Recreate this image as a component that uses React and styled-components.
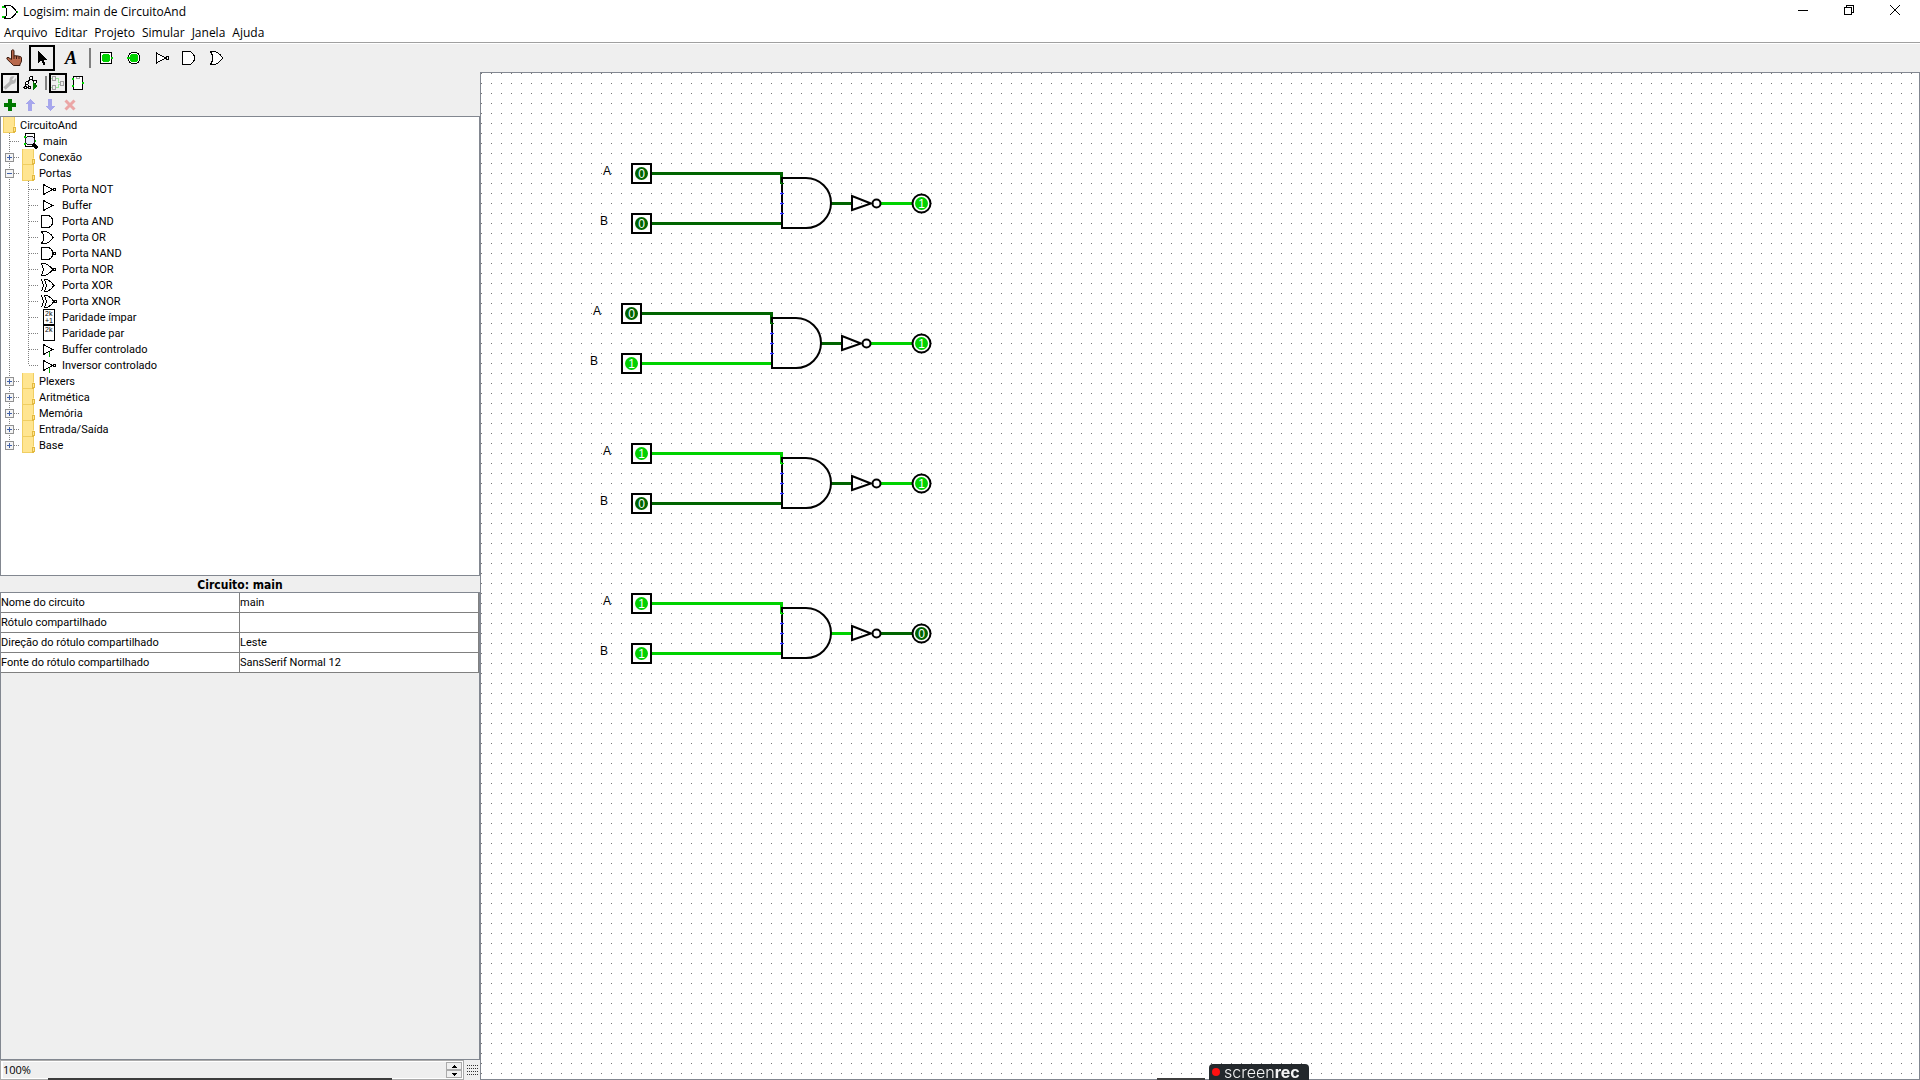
import React from "react";
import styled, { createGlobalStyle, css } from "styled-components";

const GlobalStyle = createGlobalStyle`
  *, *::before, *::after { box-sizing: border-box; }
  html, body { margin: 0; height: 100%; overflow: hidden; }
  body { background: #efefef; color: #000; font-family: Roboto, "Noto Sans", sans-serif; font-size: 11px; }
  button { font: inherit; color: inherit; background: none; border: 0; padding: 0; }
  svg { display: block; flex: none; }
`;

const DARK = "#006400";
const BRIGHT = "#00d200";
const LINE = "#828790";

/* ---------- window frame ---------- */
const Window = styled.div`
  display: flex;
  flex-direction: column;
  height: 100vh;
`;
const TitleBar = styled.header`
  display: flex;
  align-items: center;
  height: 23px;
  padding: 0 2px;
  background: #fff;
  font-family: "Open Sans", "Noto Sans", sans-serif;
`;
const Title = styled.h1`
  flex: 1;
  margin: 0;
  padding-left: 4px;
  font-size: 12px;
  line-height: 22px;
  font-weight: 400;
`;
const WindowButton = styled.button`
  display: grid;
  place-items: center;
  width: 46px;
  height: 20px;
  margin-bottom: 4px;
`;
const MenuBar = styled.nav`
  display: flex;
  gap: 7px;
  height: 20px;
  padding-left: 4px;
  background: #fff;
  border-bottom: 1px solid #a0a0a0;
`;
const MenuButton = styled.button`
  font-family: "Open Sans", "Noto Sans", sans-serif;
  font-size: 12px;
  line-height: 20px;
`;

/* ---------- toolbars ---------- */
const ToolBar = styled.div`
  display: flex;
  height: 29px;
  border-top: 1px solid #fff;
`;
const ToolButton = styled.button`
  display: grid;
  place-items: center;
  width: 26px;
  height: 26px;
  margin: 1px;
  border: 2px solid ${(p) => (p.$selected ? "#000" : "transparent")};
`;
const Separator = styled.span`
  width: 2px;
  height: 20px;
  margin: 4px 1px 4px 5px;
  background: #808080;
`;
const MiniBar = styled.div`
  display: flex;
  height: 22px;
  padding: 1px 0;
`;
const MiniButton = styled(ToolButton)`
  width: 18px;
  height: 20px;
  margin: 0 1px;
`;
const MiniSeparator = styled(Separator)`
  height: 14px;
  margin: 3px 1px 3px 5px;
`;

/* ---------- body ---------- */
const Body = styled.div`
  display: flex;
  flex: 1;
  min-height: 0;
`;
const Sidebar = styled.aside`
  display: flex;
  flex-direction: column;
  width: 25%;
`;
const Explorer = styled.section`
  display: flex;
  flex-direction: column;
  flex: 0 0 504px;
`;
const TreePane = styled.div`
  flex: 1;
  min-height: 0;
  overflow: hidden;
  background: #fff;
  border: 1px solid ${LINE};
`;
const TreeList = styled.ul`
  list-style: none;
  margin: 0;
  padding: 0;
`;
const TreeRow = styled.div`
  display: flex;
  height: 16px;
  line-height: 18px;
  white-space: nowrap;
`;
const Attributes = styled.section`
  display: flex;
  flex-direction: column;
  flex: 1;
  min-height: 0;
`;
const AttributesTitle = styled.h2`
  height: 16px;
  margin: 0;
  font-family: "DejaVu Sans Condensed", "DejaVu Sans", sans-serif;
  font-stretch: condensed;
  font-size: 12px;
  line-height: 18px;
  text-align: center;
`;
const AttributesPane = styled.div`
  flex: 1;
  border: 1px solid ${LINE};
`;
const Table = styled.table`
  width: 100%;
  table-layout: fixed;
  border-collapse: separate;
  border-spacing: 0;
  background: #fff;
`;
const cell = css`
  height: 20px;
  padding: 0;
  border-right: 1px solid #808080;
  border-bottom: 1px solid #808080;
  font-weight: 400;
  text-align: left;
  line-height: 19px;
`;
const NameCell = styled.th`${cell}`;
const ValueCell = styled.td`${cell}`;

const StatusRow = styled.div`
  display: flex;
  height: 20px;
`;
const ZoomBox = styled.div`
  display: flex;
  flex: 1;
  padding: 1px;
  background: #fff;
  border: 1px solid #ababab;
`;
const ZoomInput = styled.input`
  flex: 1;
  min-width: 0;
  margin: 0 0 0 1px;
  padding: 0;
  border: 0;
  background: #efefef;
  font-family: "Open Sans", "Noto Sans", sans-serif;
  font-size: 11px;
  line-height: 16px;
`;
const Spinner = styled.div`
  display: flex;
  flex-direction: column;
  width: 16px;
`;
const SpinButton = styled.button`
  display: grid;
  place-items: center;
  height: 8px;
  border: 1px solid #ababab;
  background: #f0f0f0;
`;
const Grip = styled.div`
  display: grid;
  place-items: center;
  width: 16px;
`;

const Canvas = styled.main`
  flex: 1;
  min-width: 0;
  overflow: hidden;
  border: 1px solid ${LINE};
  background: #fff;
`;

const Recorder = styled.div`
  position: fixed;
  bottom: 0;
  left: 1209px;
  display: flex;
  align-items: center;
  gap: 4px;
  width: 100px;
  height: 16px;
  padding-left: 3px;
  border-radius: 4px 4px 0 0;
  background: #23282c;
  color: #f4f4f4;
  font-family: Inter, sans-serif;
  font-size: 16px;
  line-height: 16px;
  font-weight: 300;

  b { font-weight: 700; }
`;
const RecordDot = styled.span`
  width: 8px;
  height: 8px;
  border-radius: 50%;
  background: #ff1010;
`;
const Edge = styled.span`
  position: fixed;
  bottom: 0;
  left: ${(p) => p.$left}px;
  width: ${(p) => p.$width}px;
  height: 2px;
  background: #3c3c3c;
`;

/* ---------- icons ---------- */
const Icon = ({ w = 20, h = 20, smooth, children }) => (
  <svg width={w} height={h} viewBox={`0 0 ${w} ${h}`} fill="none" stroke="#000"
    shapeRendering={smooth ? "auto" : "crispEdges"} aria-hidden="true">
    {children}
  </svg>
);

const AppIcon = () => (
  <Icon w={17} h={18}>
    <path d="M0 4h4M0 14h4" stroke={BRIGHT} strokeWidth="2" />
    <path d="M14 9h2" stroke={BRIGHT} strokeWidth="2" />
    <path d="M2.500 2.500H8Q12 4 14.500 9Q12 14 8 15.500H2.500Q7.500 9 2.500 2.500" />
  </Icon>
);
const HandIcon = () => (
  <Icon smooth>
    <path d="M7.500 2.500q1.500-1.500 2.500 0V8q1-.8 2 0 1-.7 2 .2 1-.5 2 .5 1.300-.2 1.500 1V13q-.5 2-1.500 3v1.500H9.500Q7 15 3.300 11.500q-1.300-2 .7-2.300L7.500 11.500Z" fill="#b9694c" stroke="#3c1c10" />
    <path d="M10 8v3M12.500 8v3M15 9v2" stroke="#3c1c10" />
  </Icon>
);
const ArrowIcon = () => (
  <Icon><path d="M6 3V15L9 12.500L11.500 17.500L13.500 16.500L11.500 12H15Z" fill="#000" stroke="none" /></Icon>
);
const TextIcon = () => (
  <Icon smooth>
    <text x="5" y="16" fontFamily="Liberation Serif, serif" fontSize="18" fontWeight="700" fontStyle="italic" fill="#000" stroke="none">A</text>
  </Icon>
);
const InputIcon = () => (
  <Icon>
    <rect x="4.500" y="4.500" width="11" height="11" fill="#fff" />
    <circle cx="10" cy="10" r="4.500" fill={BRIGHT} stroke="none" />
    <path d="M15 10h2" stroke={BRIGHT} strokeWidth="2" />
  </Icon>
);
const OutputIcon = () => (
  <Icon>
    <circle cx="10" cy="10" r="6" fill="#fff" />
    <circle cx="10" cy="10" r="4.500" fill={BRIGHT} stroke="none" />
    <path d="M3 10h3" stroke={BRIGHT} strokeWidth="2" />
  </Icon>
);
const NotTool = () => (
  <Icon><path d="M4.500 5V15L13.500 10Z" fill="#fff" /><circle cx="15.500" cy="10" r="1.500" fill="#fff" /></Icon>
);
const AndTool = () => (
  <Icon><path d="M2.500 3.500H8.500A6 6.500 0 0 1 8.500 16.500H2.500Z" fill="#fff" /></Icon>
);
const OrTool = () => (
  <Icon><path d="M2.500 3.500H6Q11 4 14.500 10Q11 16 6 16.500H2.500Q7 10 2.500 3.500Z" fill="#fff" /></Icon>
);
const WrenchIcon = () => (
  <Icon w={14} h={16} smooth>
    <path d="M1.500 13.500L8 7.500" stroke="#b4b4b4" strokeWidth="3.500" />
    <path d="M13 3L10.500 5.500 9 4.500 11.500 1.500Q7 .5 6.500 4.500 6 9 9.500 9 14 8.500 13 3Z" fill="#b4b4b4" stroke="none" />
  </Icon>
);
const SimIcon = () => (
  <Icon w={16} h={16}>
    <path d="M8 3L4 8L2 12M4 8L6 12M8 3L12 8L11 12" />
    <circle cx="8" cy="3" r="1.500" fill="#fff" />
    <circle cx="4" cy="8" r="1.500" fill="#fff" />
    <circle cx="12" cy="7" r="1.500" fill="#fff" />
    <circle cx="2.500" cy="12.500" r="1.500" fill="#fff" />
    <circle cx="6.500" cy="12.500" r="1.500" fill="#fff" />
    <path d="M10 6.500V15.500L15 11Z" fill="#007800" stroke="none" />
  </Icon>
);
const LayoutIcon = () => (
  <Icon w={14} h={16}>
    <path d="M5 3.500H7.500V7.500H10M5 12.500H7.500V9.500H10M0 3.500H1M0 12.500H1" stroke="#96e696" />
    <path d="M1.500 1.500h3v4h-3zM1.500 10.500h3v4h-3zM9.500 6.500h3v4h-3z" stroke="#a0a0a0" />
  </Icon>
);
const ChipIcon = () => (
  <Icon w={14} h={16}>
    <path d="M2.500 1.500h9v13h-9z" fill="#fff" />
    <path d="M5.500 2v1.500h3V2" stroke="#a0a0a0" />
    <path d="M1 4h2M1 11h2M11 8h2" stroke={BRIGHT} strokeWidth="2" />
  </Icon>
);
const PlusIcon = () => (
  <Icon w={14} h={14}><path d="M7 1v12M1 7h12" stroke="#007800" strokeWidth="4" /></Icon>
);
const UpIcon = () => (
  <Icon w={14} h={14}><path d="M7 1L12 6H9V13H5V6H2Z" fill="#a6a6ec" stroke="none" /></Icon>
);
const DownIcon = () => (
  <Icon w={14} h={14}><path d="M7 13L12 8H9V1H5V8H2Z" fill="#a6a6ec" stroke="none" /></Icon>
);
const RemoveIcon = () => (
  <Icon w={14} h={14} smooth><path d="M2.500 2.500L11.500 11.500M11.500 2.500L2.500 11.500" stroke="#eba6a6" strokeWidth="3" /></Icon>
);

const FolderIcon = () => (
  <Icon w={19} h={16}>
    <path d="M2 0H14V16H2Z" fill="#ffe591" stroke="none" />
    <path d="M2.500 0V15.500H12M13.500 0V9" stroke="#f0ce62" />
    <path d="M12.500 10.500h2v4l-2 1z" fill="#ffe591" stroke="#e3b93f" />
  </Icon>
);
const MainIcon = () => (
  <Icon w={23} h={16}>
    <path d="M5.500.5h9v13h-9z" fill="#fff" />
    <path d="M4 4h2M4 11h2M14 8h2" stroke={BRIGHT} strokeWidth="2" />
    <circle cx="10" cy="7.500" r="4.500" fill="#eef" stroke="#222" />
    <path d="M13 11L17.500 15.500" strokeWidth="3" />
  </Icon>
);
const triangle = <path d="M4.500 3.500V13.500L13.500 8.500Z" />;
const bubble = <circle cx="15.500" cy="8.500" r="1.500" />;
const orBody = <path d="M2.500 2.500H6Q11 3 14 8.500Q11 14 6 14.500H2.500Q7 8.500 2.500 2.500Z" />;
const orSmall = <path d="M2.500 2.500H6Q10 4 14 8.500Q10 13 6 14.500H2.500Q6 8.500 2.500 2.500Z" />;
const xorBody = <path d="M2.500 2.500Q6 8.500 2.500 14.500M5.500 2.500H8Q12 4 15 8.500Q12 13 8 14.500H5.500Q9 8.500 5.500 2.500Z" />;
const control = <path d="M10.500 11V16" stroke="#00a000" />;
const parityBox = <path d="M4.500.5h11v15h-11z" />;
const parityText = (y, s) => (
  <text x="6" y={y} fontFamily="Liberation Sans, sans-serif" fontSize="7" fill="#000" stroke="none">{s}</text>
);
const gates = {
  not: <>{triangle}{bubble}</>,
  buffer: triangle,
  and: <path d="M2.500 2.500H8A6 6 0 0 1 8 14.500H2.500Z" />,
  or: orBody,
  nand: <><path d="M2.500 2.500H8A6 6 0 0 1 8 14.500H2.500Z" />{bubble}</>,
  nor: <>{orSmall}{bubble}</>,
  xor: xorBody,
  xnor: <>{xorBody}<circle cx="16.500" cy="8.500" r="1.500" fill="#fff" /></>,
  odd: <>{parityBox}{parityText(7, "2k")}{parityText(14, "+1")}</>,
  even: <>{parityBox}{parityText(7, "2k")}</>,
  cbuffer: <>{triangle}{control}</>,
  cnot: <>{triangle}{bubble}{control}</>,
};
const GateIcon = ({ kind }) => <Icon w={23} h={16}>{gates[kind]}</Icon>;

const Guide = ({ branch = true, last, box }) => (
  <Icon w={19} h={16}>
    <path d={`M8.500 0V${last ? 8 : 16}`} stroke="#808080" strokeDasharray="1 1" />
    {branch && <path d="M9 8.500H19" stroke="#808080" strokeDasharray="1 1" />}
    {box && (
      <>
        <rect x="4.500" y="4.500" width="8" height="8" fill="#f4f4f4" stroke="#919191" />
        <path d={box === "open" ? "M6 8.500h5" : "M6 8.500h5M8.500 6v5"} stroke="#4060a8" />
      </>
    )}
  </Icon>
);

/* ---------- data ---------- */
const menus = ["Arquivo", "Editar", "Projeto", "Simular", "Janela", "Ajuda"];
const portas = [
  ["not", "Porta NOT"], ["buffer", "Buffer"], ["and", "Porta AND"], ["or", "Porta OR"],
  ["nand", "Porta NAND"], ["nor", "Porta NOR"], ["xor", "Porta XOR"], ["xnor", "Porta XNOR"],
  ["odd", "Paridade ímpar"], ["even", "Paridade par"],
  ["cbuffer", "Buffer controlado"], ["cnot", "Inversor controlado"],
];
const libraries = [
  { name: "Conexão" }, { name: "Portas", children: portas }, { name: "Plexers" },
  { name: "Aritmética" }, { name: "Memória" }, { name: "Entrada/Saída" }, { name: "Base" },
];
const attributes = [
  ["Nome do circuito", "main"],
  ["Rótulo compartilhado", ""],
  ["Direção do rótulo compartilhado", "Leste"],
  ["Fonte do rótulo compartilhado", "SansSerif Normal 12"],
];
const circuits = [
  { x: 160, y: 100, a: 0, b: 0 },
  { x: 150, y: 240, a: 0, b: 1 },
  { x: 160, y: 380, a: 1, b: 0 },
  { x: 160, y: 530, a: 1, b: 1 },
];
const OUTPUT_X = 440;

/* ---------- circuit drawing ---------- */
const tone = (v) => (v ? BRIGHT : DARK);

const Value = ({ x, y, v }) => (
  <>
    <circle cx={x + 0.5} cy={y + 0.5} r="6.500" fill={tone(v)} />
    <text x={x + 0.5} y={y + 5} textAnchor="middle" fontSize="12" fill="#fff">{v}</text>
  </>
);
const Pin = ({ x, y, v }) => (
  <>
    <rect x={x - 9} y={y - 9} width="19" height="19" fill="#fff" stroke="#000" strokeWidth="2" shapeRendering="crispEdges" />
    <Value x={x} y={y} v={v} />
  </>
);
const Wire = ({ d, v }) => (
  <path d={d} fill="none" stroke={tone(v)} strokeWidth="3" shapeRendering="crispEdges" />
);
const Port = ({ x, y, color }) => (
  <path d={`M${x - 2} ${y + 0.5}h4M${x} ${y - 1}v3`} stroke={color} strokeWidth="1" shapeRendering="crispEdges" />
);

const Circuit = ({ x, y, a, b }) => {
  const and = a & b;
  const out = and ? 0 : 1;
  const mid = y + 30;
  return (
    <g>
      <text x={x - 38} y={y + 2} fontSize="12">A</text>
      <text x={x - 41} y={y + 52} fontSize="12">B</text>
      <Wire v={a} d={`M${x + 10} ${y + 0.5}H${x + 140.500}V${y + 11}`} />
      <Wire v={b} d={`M${x + 10} ${y + 50.500}H${x + 141}`} />
      <Wire v={and} d={`M${x + 190} ${mid + 0.500}H${x + 211}`} />
      <Wire v={out} d={`M${x + 239} ${mid + 0.500}H${OUTPUT_X - 9}`} />
      <path d={`M${x + 141} ${y + 5}H${x + 165}A25 25 0 0 1 ${x + 165} ${y + 55}H${x + 141}Z`} fill="none" stroke="#000" strokeWidth="2" />
      {[20, 30, 40].map((d) => (
        <Port key={d} x={x + 140.5} y={y + d} color="#2828ff" />
      ))}
      <Port x={x + 140.5} y={y + 10} color={tone(a)} />
      <path d={`M${x + 211} ${mid - 7}V${mid + 7}L${x + 230} ${mid + 0.500}Z`} fill="none" stroke="#000" strokeWidth="2" />
      <circle cx={x + 235.500} cy={mid + 0.500} r="4" fill="none" stroke="#000" strokeWidth="2" />
      <Pin x={x} y={y} v={a} />
      <Pin x={x} y={y + 50} v={b} />
      <circle cx={OUTPUT_X + 0.5} cy={mid + 0.5} r="9" fill="#fff" stroke="#000" strokeWidth="2" />
      <Value x={OUTPUT_X} y={mid} v={out} />
    </g>
  );
};

const Tool = ({ label, selected, children }) => (
  <ToolButton type="button" aria-label={label} $selected={selected}>{children}</ToolButton>
);
const Mini = ({ label, selected, children }) => (
  <MiniButton type="button" aria-label={label} $selected={selected}>{children}</MiniButton>
);

export default function App() {
  return (
    <>
      <GlobalStyle />
      <Window>
        <TitleBar>
          <AppIcon />
          <Title>Logisim: main de CircuitoAnd</Title>
          <WindowButton type="button" aria-label="Minimizar">
            <Icon w={12} h={12}><path d="M1 6.500h10" /></Icon>
          </WindowButton>
          <WindowButton type="button" aria-label="Restaurar">
            <Icon w={12} h={12}><path d="M1.500 3.500h7v7h-7zM3.500 3.500v-2h7v7h-2" /></Icon>
          </WindowButton>
          <WindowButton type="button" aria-label="Fechar">
            <Icon w={12} h={12} smooth><path d="M1 1l10 10M11 1L1 11" /></Icon>
          </WindowButton>
        </TitleBar>
        <MenuBar>
          {menus.map((m) => <MenuButton type="button" key={m}>{m}</MenuButton>)}
        </MenuBar>
        <ToolBar role="toolbar">
          <Tool label="Alterar valores"><HandIcon /></Tool>
          <Tool label="Selecionar" selected><ArrowIcon /></Tool>
          <Tool label="Texto"><TextIcon /></Tool>
          <Separator />
          <Tool label="Entrada"><InputIcon /></Tool>
          <Tool label="Saída"><OutputIcon /></Tool>
          <Tool label="NOT"><NotTool /></Tool>
          <Tool label="AND"><AndTool /></Tool>
          <Tool label="OR"><OrTool /></Tool>
        </ToolBar>
        <Body>
          <Sidebar>
            <Explorer>
              <MiniBar role="toolbar">
                <Mini label="Ferramentas" selected><WrenchIcon /></Mini>
                <Mini label="Simulação"><SimIcon /></Mini>
                <MiniSeparator />
                <Mini label="Editar leiaute" selected><LayoutIcon /></Mini>
                <Mini label="Editar aparência"><ChipIcon /></Mini>
              </MiniBar>
              <MiniBar role="toolbar">
                <Mini label="Adicionar"><PlusIcon /></Mini>
                <Mini label="Subir"><UpIcon /></Mini>
                <Mini label="Descer"><DownIcon /></Mini>
                <Mini label="Remover"><RemoveIcon /></Mini>
              </MiniBar>
              <TreePane>
                <TreeRow><FolderIcon />CircuitoAnd</TreeRow>
                <TreeList>
                  <li><TreeRow><Guide /><MainIcon />main</TreeRow></li>
                  {libraries.map((lib, i) => (
                    <li key={lib.name}>
                      <TreeRow>
                        <button type="button" aria-label={`Alternar ${lib.name}`}>
                          <Guide last={i === libraries.length - 1} box={lib.children ? "open" : "closed"} />
                        </button>
                        <FolderIcon />{lib.name}
                      </TreeRow>
                      {lib.children && (
                        <TreeList>
                          {lib.children.map(([kind, name], j) => (
                            <li key={kind}>
                              <TreeRow>
                                <Guide branch={false} />
                                <Guide last={j === lib.children.length - 1} />
                                <GateIcon kind={kind} />{name}
                              </TreeRow>
                            </li>
                          ))}
                        </TreeList>
                      )}
                    </li>
                  ))}
                </TreeList>
              </TreePane>
            </Explorer>
            <Attributes>
              <AttributesTitle>Circuito: main</AttributesTitle>
              <AttributesPane>
                <Table>
                  <tbody>
                    {attributes.map(([name, value]) => (
                      <tr key={name}>
                        <NameCell scope="row">{name}</NameCell>
                        <ValueCell>{value}</ValueCell>
                      </tr>
                    ))}
                  </tbody>
                </Table>
              </AttributesPane>
            </Attributes>
            <StatusRow>
              <ZoomBox>
                <ZoomInput type="text" aria-label="Zoom" defaultValue="100%" />
                <Spinner>
                  <SpinButton type="button" aria-label="Aumentar">
                    <Icon w={5} h={3}><path d="M0 3L2.500 0L5 3Z" fill="#000" stroke="none" /></Icon>
                  </SpinButton>
                  <SpinButton type="button" aria-label="Diminuir">
                    <Icon w={5} h={3}><path d="M0 0L2.500 3L5 0Z" fill="#000" stroke="none" /></Icon>
                  </SpinButton>
                </Spinner>
              </ZoomBox>
              <Grip>
                <Icon w={11} h={11}>
                  {[0.5, 3.5, 6.5, 9.5].map((y) => (
                    <path key={y} d={`M0 ${y}h11`} strokeDasharray="1 1" stroke="#333" />
                  ))}
                </Icon>
              </Grip>
            </StatusRow>
          </Sidebar>
          <Canvas>
            <svg width="100%" height="100%" fontFamily="Liberation Sans, sans-serif" role="img" aria-label="Circuito main">
              <defs>
                <pattern id="grid" width="10" height="10" patternUnits="userSpaceOnUse">
                  <rect width="1" height="1" fill="#777" />
                </pattern>
              </defs>
              <rect width="100%" height="100%" fill="url(#grid)" />
              {circuits.map((c) => <Circuit key={c.y} {...c} />)}
            </svg>
          </Canvas>
        </Body>
      </Window>
      <Edge $left={48} $width={344} />
      <Edge $left={1157} $width={48} />
      <Recorder>
        <RecordDot />
        <span>screen<b>rec</b></span>
      </Recorder>
    </>
  );
}
